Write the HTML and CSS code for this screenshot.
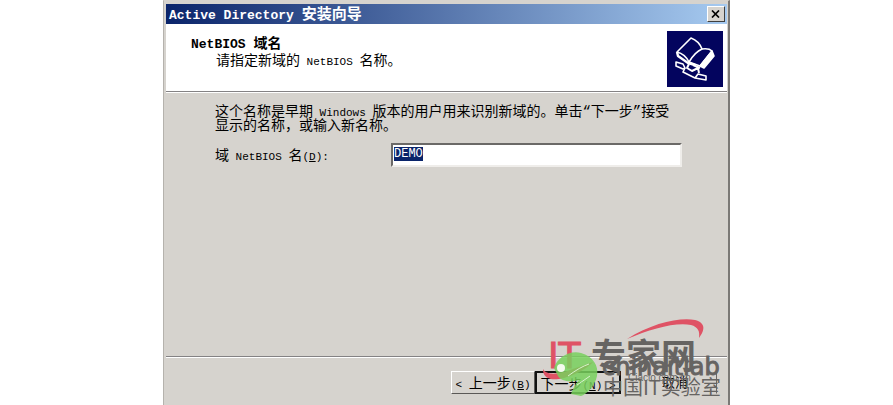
FILE: index.html
```html
<!DOCTYPE html>
<html lang="zh-CN">
<head>
    <meta charset="UTF-8">
    <title>Active Directory 安装向导</title>
    <link rel="stylesheet" href="styles.css">
</head>
<body>

<div class="wizard">
    <div class="title-bar">
        <h1><span class="latin">Active Directory </span>安装向导</h1>
        <button type="button" class="close" aria-label="关闭">
            <svg width="10" height="8" viewBox="0 0 10 8"><path d="M1 0.5L8 7.5M8 0.5L1 7.5" stroke="#000" stroke-width="1.7"/></svg>
        </button>
    </div>

    <div class="header">
        <div class="header-text">
            <h2><span class="latin">NetBIOS </span>域名</h2>
            <p>请指定新域的<span class="latin"> NetBIOS </span>名称。</p>
        </div>
        <svg class="header-icon" width="56" height="56" viewBox="0 0 56 56" fill="none" stroke="#fff" stroke-width="1.6" stroke-linejoin="round">
            <rect width="56" height="56" fill="#03045e" stroke="none"/>
            <path d="M10 21L24 7Q32 10 35 18Q28 21 22 31Q18 23 10 21Z"/>
            <path d="M35 18Q42 17 45 20L33 35L22 31"/>
            <path d="M45 20L47 25L37 37L33 35Z" fill="#fff"/>
            <path d="M10 21L11 25L21 32L28 34" stroke-width="2.4"/>
            <path d="M9 31L16 33L18 37L16 38L9 35Z"/>
            <path d="M18 37L16 41L28 47L31 43L39 45V49L28 47"/>
            <path d="M22 33L20 37L25 40L31 37L32 42M26 34L33 37" stroke-width="2"/>
        </svg>
    </div>

    <div class="content">
        <p>这个名称是早期<span class="latin"> Windows </span>版本的用户用来识别新域的。单击<span class="quote">“</span>下一步<span class="quote">”</span>接受<br>显示的名称，或输入新名称。</p>
        <div class="field">
            <label for="netbios">域<span class="latin"> NetBIOS </span>名<span class="latin">(<u>D</u>):</span></label>
            <input type="text" id="netbios" value="DEMO">
        </div>
    </div>

    <div class="footer">
        <button type="button"><span class="latin">&lt; </span>上一步<span class="latin">(<u>B</u>)</span></button>
        <button type="button" class="default">下一步<span class="latin">(<u>N</u>) &gt;</span></button>
        <button type="button" class="cancel">取消</button>
    </div>

    <svg class="watermark" width="195" height="90" viewBox="-2 0 195 90">
        <path d="M92 24C117 8 145 2 160 5C171 8 170 15 164 23C165 16 163 12 156 10C140 7 116 14 92 24Z" fill="#df5365"/>
        <text class="mark-it" x="13" y="53">IT</text>
        <text class="mark-name" x="56" y="54">专家网</text>
        <path d="M8 54C12 61 24 59 35 55L58 47C48 58 22 68 13 63C9 61 8 58 8 54Z" fill="#df5365"/>
        <path d="M19 53C22 43 34 35 46 38C58 41 64 51 62 61C60 71 51 80 46 81L36 79C38 74 40 69 44 65C35 68 26 66 23 61Z" fill="#78d05d" opacity="0.85"/>
        <circle cx="26" cy="53" r="4" fill="#f4fbef"/>
        <path d="M33 61Q45 52 54 49M42 70L55 61" fill="none" stroke="#d8f2cc" stroke-width="1"/>
        <text class="mark-lab" x="67" y="60">chinaitlab</text>
        <text class="mark-url" x="93" y="66">Ciaclo.com.cn</text>
        <text class="mark-sub" x="68" y="80">中国IT实验室</text>
    </svg>
</div>

<script>
const nameBox = document.getElementById("netbios");
nameBox.focus();
nameBox.select();
</script>

</body>
</html>
```
FILE: styles.css
```css
* {
    box-sizing: border-box;
}
body {
    margin: 0;
    background: #fff;
    color: #000;
    font-family: "Liberation Sans", "Noto Sans CJK SC", sans-serif;
    font-size: 14px;
    line-height: 14px;
}
h1, h2, p {
    margin: 0;
}
.latin {
    font-family: "Liberation Mono", monospace;
    font-size: 11px;
    line-height: 0;
    white-space: pre;
}
.quote {
    font-family: "Liberation Mono", monospace;
    line-height: 0;
}
.wizard {
    position: relative;
    display: flex;
    flex-direction: column;
    max-width: 567px;
    min-height: 100vh;
    margin: 0 auto;
    padding: 3px 1px 0 2px;
    background: #d6d3ce;
    border-left: 1px solid #b5b2ad;
    border-right: 2px solid #7b7976;
    border-top: 1px solid #d6d3ce;
}
.title-bar {
    display: flex;
    align-items: center;
    justify-content: space-between;
    height: 20px;
    padding: 0 2px 0 3px;
    background: linear-gradient(90deg, #0a246a, #a6caf0);
}
.title-bar h1 {
    color: #fff;
    font-size: 15px;
    line-height: 20px;
}
.title-bar .latin, .header h2 .latin {
    font-size: 13px;
}
.close {
    display: flex;
    align-items: center;
    justify-content: center;
    width: 18px;
    height: 16px;
    padding: 0;
    background: #d6d3ce;
    border: 1px solid;
    border-color: #fff #404040 #404040 #fff;
}
.header {
    display: flex;
    justify-content: space-between;
    height: 68px;
    padding: 7px 4px 0 25px;
    background: #fff;
    border-bottom: 1px solid #848284;
}
.header-text {
    padding-top: 4px;
}
.header h2 {
    font-size: 14px;
    line-height: 16px;
}
.header p {
    padding-left: 25px;
    line-height: 18px;
}
.content {
    flex: 1;
    padding: 11px 45px 0 49px;
    border-top: 1px solid #fff;
}
.field {
    display: flex;
    align-items: center;
    margin-top: 11px;
}
.field label {
    width: 176px;
    flex-shrink: 0;
}
.field input {
    flex: 1;
    min-width: 0;
    height: 24px;
    padding: 0 1px 3px;
    background: #fff;
    border: 2px solid;
    border-color: #6b6967 #efedea #efedea #6b6967;
    border-radius: 0;
    outline: none;
    font-family: "Liberation Mono", monospace;
    font-size: 12px;
}
.field input::selection {
    background: #0a246a;
    color: #fff;
}
.footer {
    display: flex;
    justify-content: flex-end;
    height: 49px;
    padding: 14px 10px 0;
    border-top: 1px solid #848284;
    box-shadow: inset 0 1px #fff;
}
.footer button {
    width: 84px;
    height: 23px;
    padding: 0 0 4px;
    background: #d6d3ce;
    border: 1px solid;
    border-color: #fff #5a5856 #5a5856 #fff;
    color: #000;
    font-family: inherit;
    font-size: 14px;
}
.footer .default {
    width: 86px;
    border: 2px solid #111;
}
.footer .cancel {
    width: 84px;
    margin-left: 12px;
    border-color: transparent #6b6967 transparent transparent;
    font-size: 13px;
}
.watermark {
    position: absolute;
    right: 0;
    bottom: 0;
    pointer-events: none;
}
.watermark text {
    fill: #666462;
}
.watermark .mark-it {
    fill: #df5365;
    stroke: #df5365;
    font-family: "DejaVu Sans", sans-serif;
    font-size: 36px;
}
.watermark .mark-name {
    font-family: "Noto Sans CJK SC", sans-serif;
    font-size: 35px;
    font-weight: bold;
}
.watermark .mark-lab {
    font-family: "DejaVu Sans", sans-serif;
    font-size: 24px;
    stroke: #666462;
}
.watermark .mark-url {
    font-size: 10px;
}
.watermark .mark-sub {
    font-family: "Noto Sans CJK SC", sans-serif;
    font-size: 20px;
}
```
